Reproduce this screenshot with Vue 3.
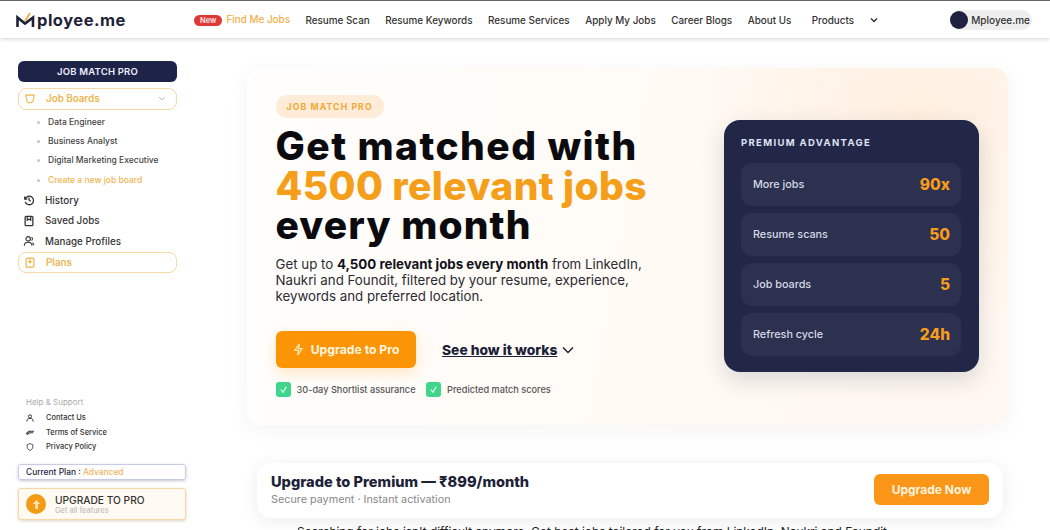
<template>
  <div class="page">
    <header class="topbar">
      <div class="logo">
        <svg width="19" height="18" viewBox="0 0 19 18" fill="none">
          <path d="M1.500 16V6.500l7.500 6 8-6V16" stroke="#1d2238" stroke-width="2.600" />
          <path d="M9 10l5-8" stroke="#f4a640" stroke-width="1.800" />
        </svg>
        <span>ployee.me</span>
      </div>
      <nav class="nav">
        <a class="nav__link nav__link--active"><span class="nav__new">New</span>Find Me Jobs</a>
        <a v-for="link in navLinks" :key="link" class="nav__link">{{ link }}</a>
        <a class="nav__link nav__products">Products</a>
        <svg class="nav__chevron" width="8" height="6" viewBox="0 0 8 6" fill="none">
          <path d="M1 1.500l3 3 3-3" stroke="#333" stroke-width="1.500" />
        </svg>
      </nav>
      <div class="account">
        <span class="account__avatar"></span>
        <span>Mployee.me</span>
      </div>
    </header>

    <div class="body">
      <aside class="sidebar">
        <div class="sidebar__title">JOB MATCH PRO</div>
        <div class="side-item side-item--boxed">
          <svg class="side-icon" width="13" height="13" viewBox="0 0 14 14" fill="none" stroke="#eeb64f" stroke-width="1.300">
            <path d="M2 3h10l-1 5a4 4 0 0 1-8 0z" />
          </svg>
          <span>Job Boards</span>
          <svg class="side-item__chevron" width="8" height="5" viewBox="0 0 8 5" fill="none">
            <path d="M1 1l3 3 3-3" stroke="#bbb" stroke-width="1" />
          </svg>
        </div>
        <ul class="boards">
          <li v-for="board in boards" :key="board">{{ board }}</li>
          <li class="boards__new">Create a new job board</li>
        </ul>
        <div class="side-item">
          <svg class="side-icon" width="12" height="12" viewBox="0 0 14 14" fill="none" stroke="#333" stroke-width="1.500">
            <path d="M2 3v3h3M2.500 6a5 5 0 1 1 0 3M7 4v3l2 1.500" />
          </svg>
          <span>History</span>
        </div>
        <div class="side-item">
          <svg class="side-icon" width="12" height="12" viewBox="0 0 14 14" fill="none" stroke="#333" stroke-width="1.500">
            <rect x="2.500" y="1.500" width="9" height="11" rx="1" />
            <path d="M5 2v4l2-1 2 1V2" />
          </svg>
          <span>Saved Jobs</span>
        </div>
        <div class="side-item">
          <svg class="side-icon" width="12" height="12" viewBox="0 0 14 14" fill="none" stroke="#333" stroke-width="1.300">
            <circle cx="6" cy="4.500" r="2.600" />
            <path d="M1.500 12.500c0-3 2-4 4.500-4s4.500 1 4.500 4M10 2.500a2.500 2.500 0 0 1 0 4M12.500 12c0-1.500-.5-2.500-1.500-3" />
          </svg>
          <span>Manage Profiles</span>
        </div>
        <div class="side-item side-item--boxed">
          <svg class="side-icon" width="13" height="13" viewBox="0 0 14 14" fill="none" stroke="#eeb64f" stroke-width="1.400">
            <rect x="2.500" y="2" width="9" height="10.500" rx="1" />
            <path d="M5 5.500l2 2 2-2M7 2v5" />
          </svg>
          <span>Plans</span>
        </div>

        <div class="support">
          <div class="support__title">Help &amp; Support</div>
          <div class="support__row">
            <svg width="8" height="8" viewBox="0 0 10 10" fill="none" stroke="#333" stroke-width="1.200">
              <circle cx="5" cy="3" r="2" />
              <path d="M1 9.500c0-3 1.500-4 4-4s4 1 4 4" />
            </svg>
            <span>Contact Us</span>
          </div>
          <div class="support__row">
            <svg width="8" height="8" viewBox="0 0 10 10" fill="none" stroke="#333" stroke-width="1.400">
              <path d="M0 7l4-3h6M1 8l4-2h4" />
            </svg>
            <span>Terms of Service</span>
          </div>
          <div class="support__row">
            <svg width="8" height="8" viewBox="0 0 10 10" fill="none" stroke="#555" stroke-width="1.200">
              <path d="M5 .8l3.500 1.200v3c0 2-1.500 3.500-3.500 4.200-2-.7-3.500-2.200-3.500-4.200V2z" />
            </svg>
            <span>Privacy Policy</span>
          </div>
        </div>

        <div class="plan">Current Plan : <span>Advanced</span></div>
        <div class="upgrade-box">
          <span class="upgrade-box__icon">
            <svg width="11" height="11" viewBox="0 0 12 12" fill="#ffe3b0">
              <path d="M6 1l4 4.500H7.500V11h-3V5.500H2z" />
            </svg>
          </span>
          <div>
            <div class="upgrade-box__title">UPGRADE TO PRO</div>
            <div class="upgrade-box__sub">Get all features</div>
          </div>
        </div>
      </aside>

      <main class="main">
        <section class="hero">
          <div class="hero__left">
            <span class="hero__badge">JOB MATCH PRO</span>
            <h1 class="hero__title">
              <span class="hero__line hero__line--first">Get matched with</span>
              <span class="hero__line hero__line--accent">4500 relevant jobs</span>
              <span class="hero__line hero__line--last">every month</span>
            </h1>
            <p class="hero__text">
              Get up to <b>4,500 relevant jobs every month</b> from LinkedIn, Naukri and Foundit, filtered by your resume, experience, keywords and preferred location.
            </p>
            <div class="hero__actions">
              <button type="button" class="hero__cta">
                <svg width="13" height="13" viewBox="0 0 14 14" fill="none" stroke="#ffe3b0" stroke-width="1.400">
                  <path d="M8 1L3 8h4l-1 5 5-7H7z" />
                </svg>
                Upgrade to Pro
              </button>
              <a class="hero__how">See how it works</a>
              <svg width="12" height="8" viewBox="0 0 12 8" fill="none">
                <path d="M1 1.500l5 5 5-5" stroke="#1d2238" stroke-width="1.500" />
              </svg>
            </div>
            <div class="hero__checks">
              <div v-for="check in checks" :key="check" class="hero__check">
                <span class="hero__tick">
                  <svg width="9" height="9" viewBox="0 0 10 10" fill="none">
                    <path d="M2 5l2.500 3L8 2" stroke="#e8fff2" stroke-width="1.300" />
                  </svg>
                </span>
                {{ check }}
              </div>
            </div>
          </div>
          <div class="advantage">
            <div class="advantage__title">PREMIUM ADVANTAGE</div>
            <div v-for="row in advantages" :key="row.label" class="advantage__row">
              <span>{{ row.label }}</span>
              <b>{{ row.value }}</b>
            </div>
          </div>
        </section>

        <section class="price-bar">
          <div>
            <div class="price-bar__title">Upgrade to Premium — ₹899/month</div>
            <div class="price-bar__sub">Secure payment · Instant activation</div>
          </div>
          <button type="button" class="price-bar__btn">Upgrade Now</button>
        </section>
        <p class="footnote">Searching for jobs isn't difficult anymore. Get best jobs tailored for you from LinkedIn, Naukri and Foundit.</p>
      </main>
    </div>
  </div>
</template>

<script setup>
const navLinks = ['Resume Scan', 'Resume Keywords', 'Resume Services', 'Apply My Jobs', 'Career Blogs', 'About Us']
const boards = ['Data Engineer', 'Business Analyst', 'Digital Marketing Executive']
const checks = ['30-day Shortlist assurance', 'Predicted match scores']
const advantages = [
  { label: 'More jobs', value: '90x' },
  { label: 'Resume scans', value: '50' },
  { label: 'Job boards', value: '5' },
  { label: 'Refresh cycle', value: '24h' },
]
</script>

<style>
html,
body {
  margin: 0;
  background: #fff;
  overflow: hidden;
}
</style>

<style scoped>
.page {
  height: 530px;
  overflow: hidden;
  font-family: Inter, "Open Sans", sans-serif;
  color: #20243a;
  background: #fff;
}

.topbar {
  display: flex;
  align-items: center;
  height: 38px;
  padding: 0 18px 0 16px;
  border-top: 1px solid #666;
  box-shadow: 0 1px 4px rgba(0, 0, 0, 0.18);
  box-sizing: border-box;
}

.logo {
  display: flex;
  align-items: center;
  width: 178px;
  font-size: 16.500px;
  font-weight: 700;
  color: #1d2238;
  letter-spacing: 0.500px;
}

.logo svg {
  margin-right: 2px;
}

.nav {
  display: flex;
  align-items: center;
  flex: 1;
  gap: 15.500px;
  font-size: 9.900px;
  font-weight: 500;
  color: #333;
}

.nav__link--active {
  color: #f0b04a;
}

.nav__new {
  display: inline-block;
  padding: 1px 6px;
  margin-right: 4px;
  border-radius: 6px;
  background: #dd3a36;
  color: #fdd;
  font-size: 7.500px;
  font-weight: 700;
}

.nav__products {
  margin-left: 5px;
}

.account {
  display: flex;
  align-items: center;
  gap: 3px;
  height: 20px;
  padding-right: 2px;
  border-radius: 10px;
  background: #eee;
  font-size: 10px;
  font-weight: 500;
  color: #333;
}

.account__avatar {
  width: 18px;
  height: 18px;
  border-radius: 50%;
  background: #1f2140;
}

.body {
  display: flex;
}

.sidebar {
  display: flex;
  flex-direction: column;
  width: 247px;
  height: 482px;
  padding: 23px 0 0 18px;
  box-sizing: border-box;
  flex-shrink: 0;
}

.sidebar > * {
  width: 159px;
}

.sidebar__title {
  height: 21px;
  margin-bottom: 6px;
  border-radius: 6px;
  background: #1d2448;
  color: #eef;
  font-size: 9.500px;
  font-weight: 600;
  line-height: 21px;
  text-align: center;
  letter-spacing: 0.200px;
}

.side-item {
  display: flex;
  align-items: center;
  height: 20.500px;
  font-size: 9.800px;
  font-weight: 500;
  color: #333;
}

.side-item--boxed {
  height: 21.500px;
  box-sizing: border-box;
  border: 1.500px solid #f5d9a6;
  border-radius: 8px;
  color: #eeb64f;
  font-weight: 600;
}

.side-icon {
  width: 12px;
  margin: 0 10px 0 5px;
  flex-shrink: 0;
}

.side-item__chevron {
  margin-left: auto;
  margin-right: 10px;
}

.boards {
  margin: 3px 0 0;
  padding: 0 0 0 30px;
  list-style: none;
  font-size: 8.500px;
  font-weight: 500;
  color: #444;
}

.boards li {
  position: relative;
  height: 19.400px;
  line-height: 19px;
  white-space: nowrap;
}

.boards li::before {
  content: "";
  position: absolute;
  left: -11px;
  top: 8px;
  width: 3px;
  height: 3px;
  border-radius: 50%;
  background: #c5c5c5;
}

.boards .boards__new {
  color: #eeb64f;
}

.support {
  margin-top: auto;
  margin-left: 8px;
  font-size: 7.500px;
  font-weight: 500;
  color: #333;
}

.support__title {
  margin-bottom: 3px;
  font-size: 8px;
  font-weight: 400;
  color: #aaa;
}

.support__row {
  display: flex;
  align-items: center;
  gap: 12px;
  height: 14.600px;
  white-space: nowrap;
}

.sidebar .plan {
  width: 168px;
  height: 16px;
  box-sizing: border-box;
  margin-top: 10px;
  padding-left: 7px;
  border: 1px solid #c8cbe4;
  border-radius: 3px;
  box-shadow: 0 1px 3px rgba(60, 70, 130, 0.3);
  font-size: 8.400px;
  font-weight: 500;
  line-height: 14px;
}

.plan span {
  color: #f0b566;
}

.sidebar .upgrade-box {
  display: flex;
  align-items: center;
  gap: 9px;
  width: 168px;
  height: 32px;
  box-sizing: border-box;
  margin-top: 8px;
  padding-left: 7px;
  border: 1px solid #f6d8a8;
  border-radius: 3px;
  background: #fffaf2;
  box-shadow: 0 1px 3px rgba(150, 110, 40, 0.3);
}

.upgrade-box__icon {
  display: flex;
  align-items: center;
  justify-content: center;
  width: 20px;
  height: 20px;
  border-radius: 50%;
  background: #f39b17;
}

.upgrade-box__title {
  font-size: 10.200px;
  font-weight: 500;
  color: #333;
}

.upgrade-box__sub {
  font-size: 7.500px;
  color: #b5b5b5;
}

.main {
  flex: 1;
  min-width: 0;
  padding-top: 30px;
}

.hero {
  display: flex;
  justify-content: space-between;
  width: 761px;
  height: 357px;
  box-sizing: border-box;
  padding: 27px 29px 0 28.500px;
  border-radius: 14px;
  background:
    radial-gradient(circle at 88% 14%, #ffefe0 0, rgba(255, 239, 224, 0) 30%),
    linear-gradient(100deg, #fffefd 0%, #fffaf4 55%, #fff8f0 100%);
  box-shadow: 0 4px 22px rgba(0, 0, 0, 0.05);
}

.hero__left {
  display: flex;
  flex-direction: column;
  align-items: flex-start;
  width: 400px;
}

.hero__badge {
  padding: 6.500px 11px;
  border-radius: 11px;
  background: #ffecd8;
  color: #f2a733;
  font-size: 8.700px;
  font-weight: 700;
  letter-spacing: 1.100px;
}

.hero__title {
  margin: 8px 0 0;
  font-size: 39px;
  font-weight: 800;
  line-height: 39.500px;
  color: #0b0b0f;
  white-space: nowrap;
}

.hero__line {
  display: block;
}

.hero__line--first {
  letter-spacing: 1.450px;
}

.hero__line--accent {
  color: #f59e1a;
  letter-spacing: 0.400px;
}

.hero__line--last {
  letter-spacing: 1.100px;
}

.hero__text {
  margin: 12.500px 0 0;
  width: 385px;
  font-size: 13.300px;
  line-height: 15.800px;
  color: #2b2b33;
}

.hero__text b {
  font-weight: 700;
  color: #12121a;
}

.hero__actions {
  display: flex;
  align-items: center;
  margin-top: 27px;
}

.hero__cta {
  display: flex;
  align-items: center;
  justify-content: center;
  gap: 6px;
  width: 140px;
  height: 37px;
  padding: 0;
  border: 0;
  border-radius: 6px;
  background: #fb9505;
  box-shadow: 0 5px 14px rgba(251, 149, 5, 0.22);
  color: #fff4e2;
  font-family: inherit;
  font-size: 12.200px;
  font-weight: 700;
}

.hero__how {
  margin: 0 5px 0 26.500px;
  color: #1d2238;
  font-size: 13.800px;
  font-weight: 800;
  text-decoration: underline;
}

.hero__checks {
  display: flex;
  gap: 10.500px;
  margin-top: 14px;
}

.hero__check {
  display: flex;
  align-items: center;
  gap: 6px;
  font-size: 9.200px;
  font-weight: 500;
  color: #555;
}

.hero__tick {
  display: flex;
  align-items: center;
  justify-content: center;
  width: 15px;
  height: 15px;
  border-radius: 3px;
  background: #3fd68b;
}

.advantage {
  width: 255px;
  height: 252px;
  box-sizing: border-box;
  margin-top: 25px;
  padding: 17px 18px 0 17px;
  border-radius: 16px;
  background: #222748;
  box-shadow: 0 8px 22px rgba(30, 35, 70, 0.16);
}

.advantage__title {
  margin-bottom: 15px;
  color: #dfe2f3;
  font-size: 9.500px;
  font-weight: 700;
  letter-spacing: 1.350px;
}

.advantage__row {
  display: flex;
  align-items: center;
  justify-content: space-between;
  height: 43px;
  margin-bottom: 7px;
  padding: 0 11px 0 12px;
  border-radius: 11px;
  background: #2c3150;
  color: #d7d9e6;
  font-size: 10.800px;
  font-weight: 500;
}

.advantage__row b {
  color: #f79c1b;
  font-size: 15.500px;
  font-weight: 800;
}

.price-bar {
  display: flex;
  align-items: center;
  justify-content: space-between;
  width: 746px;
  height: 55px;
  box-sizing: border-box;
  margin: 38px 0 0 10px;
  padding: 0 14px 2px 14px;
  border-radius: 14px;
  background: #fff;
  box-shadow: 0 3px 18px rgba(0, 0, 0, 0.08);
}

.price-bar__title {
  color: #1d2238;
  font-size: 14.600px;
  font-weight: 800;
}

.price-bar__sub {
  margin-top: 2px;
  color: #888;
  font-size: 10.800px;
}

.price-bar__btn {
  width: 115px;
  height: 31px;
  border: 0;
  border-radius: 6px;
  background: #fb9618;
  color: #fff2df;
  font-family: inherit;
  font-size: 12px;
  font-weight: 700;
}

.footnote {
  margin: 6px 0 0 50px;
  color: #222;
  font-size: 11.900px;
  white-space: nowrap;
}
</style>
